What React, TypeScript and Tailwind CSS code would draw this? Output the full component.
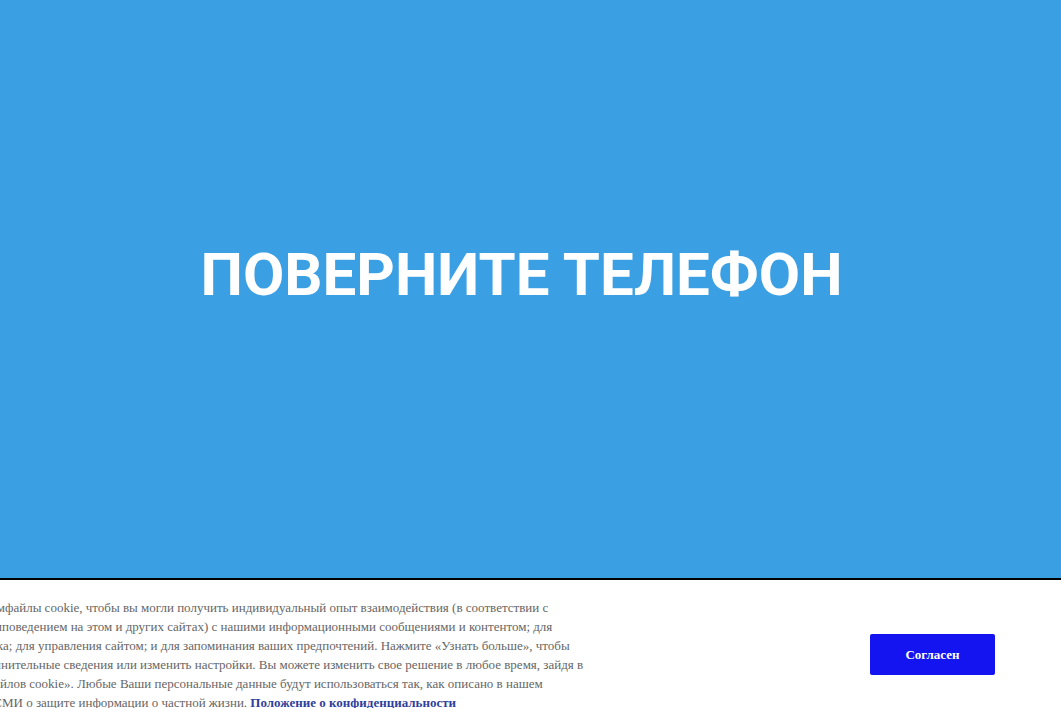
const lines: { prefix: string; start: string; text: string; link?: boolean }[] = [
  {
    prefix: "Мы и наши партнеры используем ",
    start: "w-[5px]",
    text: "файлы cookie, чтобы вы могли получить индивидуальный опыт взаимодействия (в соответствии с",
  },
  {
    prefix: "вашим ",
    start: "w-[2px]",
    text: "поведением на этом и других сайтах) с нашими информационными сообщениями и контентом; для",
  },
  {
    prefix: "анализа трафик",
    start: "w-[3px]",
    text: "а; для управления сайтом; и для запоминания ваших предпочтений. Нажмите «Узнать больше», чтобы",
  },
  {
    prefix: "получить допол",
    start: "w-[1px]",
    text: "нительные сведения или изменить настройки. Вы можете изменить свое решение в любое время, зайдя в",
  },
  {
    prefix: "«Настройки фа",
    start: "w-[0px]",
    text: "йлов cookie». Любые Ваши персональные данные будут использоваться так, как описано в нашем",
  },
  {
    prefix: "Положении С",
    start: "w-[2px]",
    text: "МИ о защите информации о частной жизни. ",
    link: true,
  },
];

export default function App() {
  return (
    <div className="flex h-[708px] w-full flex-col overflow-hidden bg-white">
      <div className="flex h-[578px] shrink-0 items-center justify-center bg-[#3a9fe3] pr-[18px] pb-[28px]">
        <h1 className="font-['Roboto',sans-serif] text-[60px] leading-none font-bold text-white">
          ПОВЕРНИТЕ ТЕЛЕФОН
        </h1>
      </div>
      <div className="flex flex-1 items-start border-t-2 border-black">
        <div className="flex w-[870px] shrink-0 items-center pt-[18px]">
          <div className="w-[600px] font-['Liberation_Serif',serif] text-[13px] leading-[19px] text-[#666]">
            {lines.map((l, i) => (
              <div key={i} className="flex whitespace-nowrap">
                <span className={`flex shrink-0 justify-end ${l.start}`}>{l.prefix}</span>
                <span>
                  {l.text}
                  {l.link && (
                    <a href="#" className="font-bold text-[#2f3f9c]">
                      Положение о конфиденциальности
                    </a>
                  )}
                </span>
              </div>
            ))}
          </div>
        </div>
        <button className="mt-[54px] h-[41px] w-[125px] rounded-[2px] bg-[#1414f0] font-['Liberation_Serif',serif] text-[13px] font-bold text-white">
          Согласен
        </button>
      </div>
    </div>
  );
}
